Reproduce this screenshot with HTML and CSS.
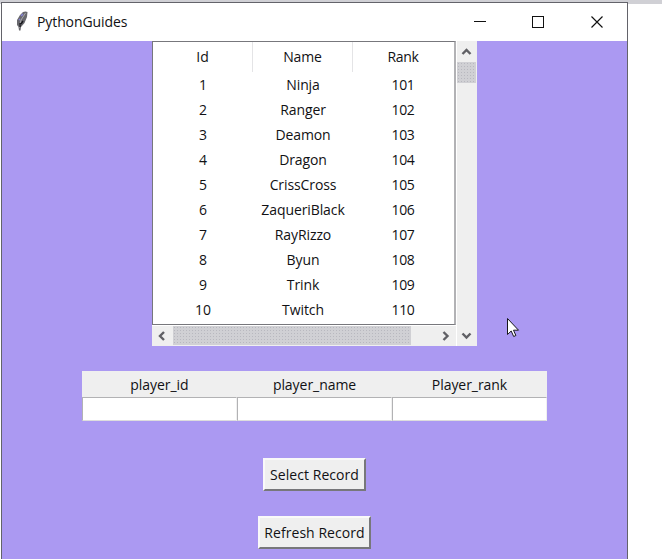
FILE: index.html
```html
<!DOCTYPE html>
<html lang="en">
<head>
<meta charset="utf-8">
<title>PythonGuides</title>
<link rel="stylesheet" href="styles.css">
</head>
<body>
<div class="window">
  <header class="titlebar">
    <svg class="feather" width="14" height="20" viewBox="0 0 14 20"><path d="M10.5 0.5 12.5 1 12 6 9.5 12 6 16 5.5 19.5 4 19.5 3.5 16 2 14 2 9 5 4 8 1Z" fill="#68686d"/><path d="M10.5 2 6 9 4 17" fill="none" stroke="#a9a9ac"/><path d="M8 3 6 5M5 8 4 9" stroke="#8581d6" stroke-width="1.6"/><path d="M5 12v4M8 10 6 13" stroke="#17171c" stroke-width="1.4"/></svg>
    <span class="title">PythonGuides</span>
    <svg class="controls" width="132" height="14" viewBox="0 0 132 14" fill="none" stroke="#111" shape-rendering="crispEdges"><path d="M0 6.5h12"/><rect x="58.5" y="1.5" width="11" height="11"/><path d="m117.5 1.5 11 11m0-11-11 11" shape-rendering="auto" stroke-width="1.15"/></svg>
  </header>
  <main class="content">
    <section class="records">
      <div class="tree">
        <div class="row head"><span>Id</span><span>Name</span><span>Rank</span></div>
        <div class="row"><span>1</span><span>Ninja</span><span>101</span></div>
        <div class="row"><span>2</span><span>Ranger</span><span>102</span></div>
        <div class="row"><span>3</span><span>Deamon</span><span>103</span></div>
        <div class="row"><span>4</span><span>Dragon</span><span>104</span></div>
        <div class="row"><span>5</span><span>CrissCross</span><span>105</span></div>
        <div class="row"><span>6</span><span>ZaqueriBlack</span><span>106</span></div>
        <div class="row"><span>7</span><span>RayRizzo</span><span>107</span></div>
        <div class="row"><span>8</span><span>Byun</span><span>108</span></div>
        <div class="row"><span>9</span><span>Trink</span><span>109</span></div>
        <div class="row"><span>10</span><span>Twitch</span><span>110</span></div>
      </div>
      <div class="vscroll">
        <svg width="20" height="21" viewBox="0 0 20 21"><path d="m5.5 13 4-4 4 4" /></svg>
        <div class="thumb"></div>
        <svg width="20" height="21" viewBox="0 0 20 21"><path d="m5.5 8.5 4 4 4-4" /></svg>
      </div>
      <div class="hscroll">
        <svg width="21" height="20" viewBox="0 0 21 20"><path d="m12 6-4 4 4 4" /></svg>
        <div class="thumb"></div>
        <svg width="21" height="20" viewBox="0 0 21 20"><path d="m8.5 6 4 4-4 4" /></svg>
      </div>
    </section>
    <section class="form">
      <label>player_id</label><label>player_name</label><label>Player_rank</label>
      <input aria-label="player_id"><input aria-label="player_name"><input aria-label="Player_rank">
    </section>
    <button class="select">Select Record</button>
    <button class="refresh">Refresh Record</button>
  </main>
</div>
<svg class="cursor" width="13" height="20" viewBox="0 0 13 20"><path d="M.5.5v16l3.7-3.5 2.5 5.5 2.2-1-2.4-5.3h5z" fill="#fff" stroke="#17171c"/></svg>
</body>
</html>
```
FILE: styles.css
```css
* { box-sizing: border-box; }
body {
  margin: 0;
  height: 559px;
  overflow: hidden;
  padding: 2px 0 0 1px;
  background: linear-gradient(#d0d0d5 4px, #fff 4px);
  font: 14px/25px "Open Sans", "Noto Sans", sans-serif;
  color: #111114;
}
.window {
  width: 627px;
  height: 557px;
  border: 1px solid #63636a;
  border-bottom: 0;
  background: #fff;
}
.titlebar {
  height: 38px;
  display: flex;
  align-items: center;
  padding: 0 21px 0 13px;
}
.feather { margin-top: -3px; }
.title { margin: -1px 0 0 8px; letter-spacing: -0.1px; }
.controls { margin-left: auto; }
.content {
  height: 518px;
  background: #ab99f2;
  display: flex;
  flex-direction: column;
  align-items: center;
}
.records {
  width: 325px;
  height: 305px;
  display: grid;
  grid-template: 284px 21px / 304px 21px;
  background: #efefef;
}
.tree {
  border: 1px solid #77777c;
  border-right: 2px solid #b2b2b5;
  background: #fff;
}
.row {
  display: grid;
  grid-template-columns: 100px 100px 100px;
  height: 25px;
  text-align: center;
  letter-spacing: -0.1px;
}
.row span:last-child { letter-spacing: -0.3px; }
.row.head { height: 30px; line-height: 30px; }
.head span { border-right: 1px solid #e4e4e6; }
.head span:last-child { border: 0; }
.vscroll {
  grid-row: 1 / 3;
  grid-column: 2;
  display: flex;
  flex-direction: column;
  justify-content: space-between;
  border-left: 1px solid #fff;
}
.hscroll { display: flex; border-top: 1px solid #fff; }
.records svg { fill: none; stroke: #606065; stroke-width: 2.4; }
.thumb {
  background-color: #d0d0d4;
  background-image: radial-gradient(circle, #b8b8bf 0.6px, transparent 0.8px);
  background-size: 3px 3px;
}
.vscroll .thumb { width: 19px; height: 21px; margin-bottom: auto; }
.hscroll .thumb { width: 238px; height: 19px; margin: 0 auto 0 0; }
.form {
  width: 465px;
  height: 50px;
  margin-top: 25px;
  display: grid;
  grid-template: 26px 24px / repeat(3, 155px);
  background: #efefef;
  text-align: center;
  letter-spacing: -0.05px;
}
.form label { line-height: 27px; }
.form input {
  min-width: 0;
  width: 155px;
  padding: 0 3px;
  border: 1px solid;
  border-color: #b2b2b4 #f0f0f0 #ddd #b2b2b4;
  border-radius: 0;
  background: #fff;
  font: inherit;
}
button {
  height: 33px;
  padding: 0;
  border: 2px solid;
  border-color: #f9f9f9 #77777a #77777a #f9f9f9;
  background: #efefef;
  font: inherit;
  color: inherit;
  letter-spacing: 0.05px;
}
.select { width: 103px; margin-top: 37px; }
.refresh { width: 113px; margin-top: 25px; }
.cursor { position: absolute; left: 507px; top: 318px; }
```
